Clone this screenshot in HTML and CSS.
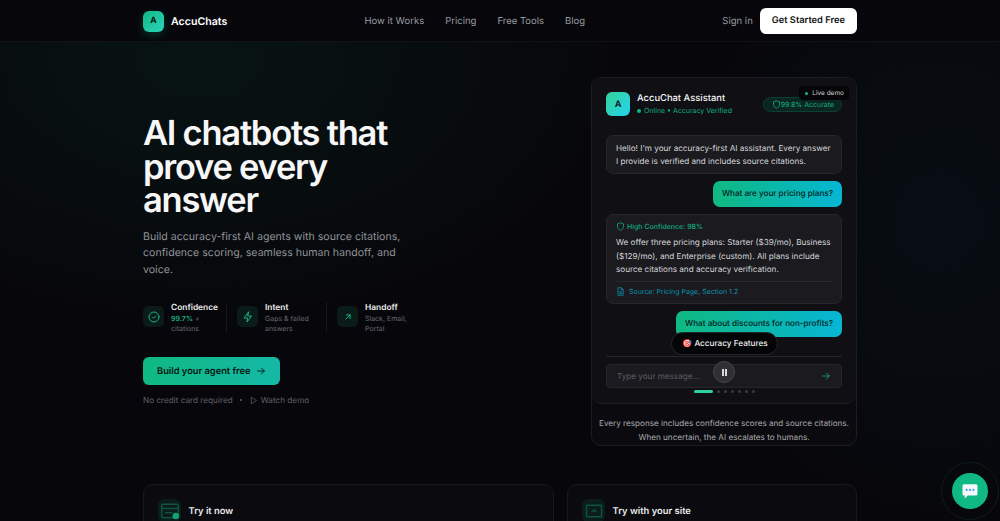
FILE: index.html
```html
<!DOCTYPE html>
<html lang="en">
<head>
  <meta charset="UTF-8">
  <meta name="viewport" content="width=device-width, initial-scale=1.0">
  <title>AccuChats</title>
  <link rel="stylesheet" href="styles.css">
</head>
<body>
  <header class="topbar">
    <div class="wrap topbar-row">
      <a class="brand" href="#">
        <span class="brand-mark">A</span>
        <span class="brand-name">AccuChats</span>
      </a>
      <nav class="nav">
        <a href="#">How it Works</a>
        <a href="#">Pricing</a>
        <a href="#">Free Tools</a>
        <a href="#">Blog</a>
      </nav>
      <div class="topbar-actions">
        <a class="signin" href="#">Sign in</a>
        <a class="btn-white" href="#">Get Started Free</a>
      </div>
    </div>
  </header>

  <main class="wrap hero">
    <section class="hero-left">
      <h1>AI chatbots that prove every answer</h1>
      <p class="lead">Build accuracy-first AI agents with source citations, confidence scoring, seamless human handoff, and voice.</p>

      <div class="stats">
        <div class="stat">
          <span class="stat-icon">
            <svg width="12" height="12" viewBox="0 0 24 24" fill="none" stroke="currentColor" stroke-width="2" stroke-linecap="round" stroke-linejoin="round"><circle cx="12" cy="12" r="10"/><path d="m8.5 12 2.5 2.5 4.5-4.5"/></svg>
          </span>
          <div>
            <div class="stat-title">Confidence</div>
            <div class="stat-text"><b>99.7%</b> + citations</div>
          </div>
        </div>
        <div class="stat">
          <span class="stat-icon">
            <svg width="12" height="12" viewBox="0 0 24 24" fill="none" stroke="currentColor" stroke-width="2" stroke-linecap="round" stroke-linejoin="round"><path d="M13 2 4 14h7l-1 8 9-12h-7z"/></svg>
          </span>
          <div>
            <div class="stat-title">Intent</div>
            <div class="stat-text">Gaps &amp; failed answers</div>
          </div>
        </div>
        <div class="stat">
          <span class="stat-icon">
            <svg width="10" height="10" viewBox="0 0 24 24" fill="none" stroke="currentColor" stroke-width="2.4" stroke-linecap="round" stroke-linejoin="round"><path d="M7 17 17 7"/><path d="M8 7h9v9"/></svg>
          </span>
          <div>
            <div class="stat-title">Handoff</div>
            <div class="stat-text">Slack, Email, Portal</div>
          </div>
        </div>
      </div>

      <a class="btn-main" href="#">
        Build your agent free
        <svg width="10" height="10" viewBox="0 0 24 24" fill="none" stroke="currentColor" stroke-width="2.2" stroke-linecap="round" stroke-linejoin="round"><path d="M4 12h16"/><path d="m13 5 7 7-7 7"/></svg>
      </a>

      <div class="note">
        <span>No credit card required</span>
        <span class="note-dot"></span>
        <a href="#">
          <svg width="9" height="9" viewBox="0 0 24 24" fill="none" stroke="currentColor" stroke-width="2" stroke-linejoin="round"><path d="M6 3l14 9-14 9z"/></svg>
          Watch demo
        </a>
      </div>
    </section>

    <section class="demo">
      <div class="chat">
        <span class="live"><i></i>Live demo</span>

        <div class="chat-head">
          <span class="chat-avatar">A</span>
          <div class="chat-who">
            <div class="chat-name">AccuChat Assistant</div>
            <div class="chat-status"><i></i>Online • Accuracy Verified</div>
          </div>
          <span class="accurate">
            <svg width="9" height="9" viewBox="0 0 24 24" fill="none" stroke="currentColor" stroke-width="2.2" stroke-linejoin="round"><path d="M12 2 4 5v7c0 5 3.5 8.2 8 10 4.5-1.800 8-5 8-10V5z"/></svg>
            99.8% Accurate
          </span>
        </div>

        <div class="msgs">
          <div class="msg bot">Hello! I'm your accuracy-first AI assistant. Every answer I provide is verified and includes source citations.</div>
          <div class="msg user">What are your pricing plans?</div>
          <div class="msg bot cited">
            <div class="conf">
              <svg width="9" height="9" viewBox="0 0 24 24" fill="none" stroke="currentColor" stroke-width="2.2" stroke-linejoin="round"><path d="M12 2 4 5v7c0 5 3.5 8.2 8 10 4.5-1.800 8-5 8-10V5z"/></svg>
              High Confidence: 98%
            </div>
            <div class="answer">We offer three pricing plans: Starter ($39/mo), Business ($129/mo), and Enterprise (custom). All plans include source citations and accuracy verification.</div>
            <div class="source">
              <svg width="9" height="9" viewBox="0 0 24 24" fill="none" stroke="currentColor" stroke-width="2.2" stroke-linejoin="round"><path d="M14 2H5v20h14V7z"/><path d="M14 2v5h5"/><path d="M8 13h8M8 17h8"/></svg>
              Source: Pricing Page, Section 1.2
            </div>
          </div>
          <div class="msg user">What about discounts for non-profits?</div>
        </div>

        <span class="feature-pill">🎯 Accuracy Features</span>

        <div class="chat-foot">
          <div class="chat-input">
            <span>Type your message...</span>
            <svg width="10" height="10" viewBox="0 0 24 24" fill="none" stroke="currentColor" stroke-width="2.2" stroke-linecap="round" stroke-linejoin="round"><path d="M4 12h16"/><path d="m13 5 7 7-7 7"/></svg>
          </div>
        </div>

        <span class="pause"><i></i><i></i></span>

        <div class="dots">
          <i class="on"></i><i></i><i></i><i></i><i></i><i></i><i></i>
        </div>
      </div>
      <p class="demo-caption">Every response includes confidence scores and source citations. When uncertain, the AI escalates to humans.</p>
    </section>
  </main>

  <section class="wrap tries">
    <div class="try">
      <span class="try-icon">
        <svg width="20" height="20" viewBox="0 0 24 24" fill="none" stroke="#10523f" stroke-width="1.8"><rect x="2" y="4" width="20" height="16" rx="2"/><path d="M2 9h20M6 14h9"/><circle cx="19" cy="18" r="4" fill="#12a377" stroke="none"/></svg>
      </span>
      <span class="try-title">Try it now</span>
    </div>
    <div class="try">
      <span class="try-icon">
        <svg width="20" height="20" viewBox="0 0 24 24" fill="none" stroke="#10523f" stroke-width="1.8"><rect x="3" y="5" width="18" height="14" rx="1"/><path d="m9 13 3-2 3 2"/></svg>
      </span>
      <span class="try-title">Try with your site</span>
    </div>
  </section>

  <div class="widget">
    <span class="widget-btn">
      <svg width="18" height="18" viewBox="0 0 24 24"><path d="M4 3h16a2 2 0 0 1 2 2v11a2 2 0 0 1-2 2H9l-4 4v-4H4a2 2 0 0 1-2-2V5a2 2 0 0 1 2-2z" fill="#f4f7fb"/><circle cx="7.5" cy="10.5" r="1.4" fill="#3b9bf0"/><circle cx="12" cy="10.5" r="1.4" fill="#3b9bf0"/><circle cx="16.5" cy="10.5" r="1.4" fill="#3b9bf0"/></svg>
    </span>
  </div>
</body>
</html>
```

FILE: styles.css
```css
* {
  box-sizing: border-box;
}
html, body {
  height: 100%;
  overflow: hidden;
}
body {
  margin: 0;
  font-family: Inter, "Liberation Sans", sans-serif;
  text-rendering: geometricPrecision;
  color: #fff;
  background-color: #07070b;
  background-image:
    radial-gradient(ellipse 420px 260px at 200px 60px, rgba(16, 185, 129, 0.07), transparent 100%),
    radial-gradient(ellipse 260px 300px at 940px 220px, rgba(20, 140, 184, 0.05), transparent 100%);
}
a {
  color: inherit;
  text-decoration: none;
}
.wrap {
  width: 714px;
  margin: 0 auto;
}

/* top bar */
.topbar {
  height: 42px;
  background-color: #07070b;
  border-bottom: 1px solid #101216;
}
.topbar-row {
  display: flex;
  align-items: center;
  justify-content: space-between;
  height: 42px;
}
.brand {
  display: flex;
  align-items: center;
  gap: 7px;
}
.brand-mark {
  display: flex;
  align-items: center;
  justify-content: center;
  width: 21px;
  height: 21px;
  border-radius: 6px;
  background: linear-gradient(135deg, #10b981, #2dd4bf);
  box-shadow: 0 3px 8px rgba(16, 185, 129, 0.25);
  color: #06130f;
  font-size: 8.5px;
  font-weight: 700;
}
.brand-name {
  font-size: 10.6px;
  font-weight: 600;
}
.nav {
  display: flex;
  gap: 21px;
  font-size: 9.5px;
  color: #96999f;
}
.topbar-actions {
  display: flex;
  align-items: center;
  gap: 7px;
}
.signin {
  font-size: 9.5px;
  color: #96999f;
}
.btn-white {
  padding: 0 12px;
  height: 26px;
  line-height: 26px;
  border-radius: 6px;
  background-color: #fff;
  color: #111;
  font-size: 9.3px;
  font-weight: 600;
}

/* hero */
.hero {
  display: flex;
  justify-content: space-between;
  align-items: flex-start;
  padding-top: 35px;
}
.hero-left {
  width: 300px;
  padding-top: 40px;
}
h1 {
  margin: 0;
  max-width: 270px;
  font-size: 34.5px;
  line-height: 33.5px;
  font-weight: 600;
  letter-spacing: -1.25px;
  color: #f7f7f8;
}
.lead {
  margin: 11px 0 0;
  max-width: 262px;
  font-size: 10.6px;
  line-height: 16.5px;
  color: #8f9298;
}
.stats {
  display: flex;
  margin-top: 24px;
}
.stat {
  display: flex;
  flex: none;
  gap: 7px;
  padding-right: 10px;
  margin-right: 10px;
  border-right: 1px solid #14161a;
  height: 31px;
  width: 84px;
}
.stat:nth-child(2) {
  width: 90px;
}
.stat:last-child {
  border-right: 0;
  margin-right: 0;
  padding-right: 0;
  width: 70px;
}
.stat-icon {
  display: flex;
  flex: none;
  align-items: center;
  justify-content: center;
  width: 21px;
  height: 21px;
  margin-top: 4px;
  border-radius: 5px;
  background-color: #0b1b17;
  color: #16b586;
}
.stat-title {
  margin-top: 1px;
  font-size: 8.4px;
  line-height: 11px;
  font-weight: 600;
  color: #eceded;
}
.stat-text {
  font-size: 7px;
  line-height: 9.5px;
  color: #65686f;
}
.stat-text b {
  color: #16b586;
  font-weight: 600;
}
.btn-main {
  display: inline-flex;
  align-items: center;
  gap: 5px;
  margin-top: 24px;
  padding: 0 14px;
  height: 28px;
  border-radius: 6px;
  background: linear-gradient(90deg, #10b981, #14b8a6);
  color: #06130f;
  font-size: 9.3px;
  font-weight: 600;
}
.note {
  display: flex;
  align-items: center;
  gap: 6px;
  margin-top: 10px;
  font-size: 8.2px;
  color: #5f6168;
}
.note a {
  display: flex;
  align-items: center;
  gap: 3px;
}
.note-dot {
  width: 2px;
  height: 2px;
  margin: 0 1px;
  border-radius: 50%;
  background-color: #5f6168;
}

/* demo panel */
.demo {
  width: 266px;
  border: 1px solid #1c1d22;
  border-radius: 10px;
  background-color: #0b0b0f;
}
.chat {
  position: relative;
  height: 326px;
  padding: 14px 14px 0;
  border-bottom: 1px solid #1f2025;
  border-radius: 10px;
  background-color: #0f0f14;
}
.live {
  position: absolute;
  top: 8px;
  right: 7px;
  display: flex;
  align-items: center;
  gap: 4px;
  padding: 0 5px 0 6px;
  height: 14px;
  border-radius: 4px;
  background-color: #050507;
  font-size: 6.5px;
  color: #d0d1d4;
}
.live i {
  width: 3px;
  height: 3px;
  border-radius: 50%;
  background-color: #10b981;
}
.chat-head {
  display: flex;
  align-items: center;
  gap: 7px;
}
.chat-avatar {
  display: flex;
  align-items: center;
  justify-content: center;
  width: 24px;
  height: 24px;
  border-radius: 6px;
  background: linear-gradient(135deg, #34d399, #22d3ee);
  color: #08201f;
  font-size: 9px;
  font-weight: 700;
}
.chat-who {
  flex: 1;
}
.chat-name {
  font-size: 9.4px;
  line-height: 12px;
  font-weight: 500;
  color: #f6f6f7;
}
.chat-status {
  display: flex;
  align-items: center;
  gap: 3px;
  margin-top: 1px;
  font-size: 7px;
  line-height: 9px;
  color: #12b083;
}
.chat-status i {
  width: 4px;
  height: 4px;
  border-radius: 50%;
  background-color: #10b981;
}
.accurate {
  display: flex;
  align-items: center;
  padding: 0 7px 0 8px;
  height: 15px;
  border: 1px solid #0d3f33;
  border-radius: 8px;
  background-color: #0b2620;
  font-size: 7px;
  color: #15ad81;
}
.msgs {
  display: flex;
  flex-direction: column;
  gap: 7px;
  margin-top: 19px;
}
.msg {
  border-radius: 7px;
  font-size: 8.15px;
  line-height: 13px;
}
.msg.bot {
  padding: 6px 9px 5px;
  border: 1px solid #26272c;
  background-color: #1a1a1f;
  color: #d6d7d9;
}
.msg.cited {
  padding-bottom: 6px;
}
.msg.user {
  align-self: flex-end;
  padding: 6px 9px 7px;
  background: linear-gradient(90deg, #10b981, #06b6d4);
  color: #06201c;
  font-weight: 500;
}
.conf {
  display: flex;
  align-items: center;
  gap: 2px;
  font-size: 7px;
  line-height: 11px;
  font-weight: 500;
  color: #12ab80;
}
.answer {
  margin-top: 4px;
  line-height: 13.5px;
}
.source {
  display: flex;
  align-items: center;
  gap: 4px;
  margin-top: 4px;
  padding-top: 5px;
  border-top: 1px solid #2a2b30;
  font-size: 7px;
  line-height: 10px;
  color: #0e93ad;
}
.feature-pill {
  position: absolute;
  left: 79px;
  top: 254px;
  padding: 0 9px 0 10px;
  height: 23px;
  line-height: 21px;
  border: 1px solid #24252a;
  border-radius: 12px;
  background-color: #040506;
  font-size: 8.2px;
  font-weight: 500;
  color: #f0f0f1;
  white-space: nowrap;
}
.chat-foot {
  margin-top: 19px;
  padding-top: 7px;
  border-top: 1px solid #24252a;
}
.chat-input {
  display: flex;
  align-items: center;
  justify-content: space-between;
  padding: 0 10px;
  height: 24px;
  border: 1px solid #26272c;
  border-radius: 4px;
  background-color: #1a1a1f;
  font-size: 8.15px;
  color: #5c5e64;
}
.chat-input svg {
  color: #10a37a;
}
.pause {
  position: absolute;
  left: 121px;
  top: 283px;
  display: flex;
  align-items: center;
  justify-content: center;
  gap: 1px;
  width: 22px;
  height: 22px;
  border: 1px solid #46474c;
  border-radius: 50%;
  background-color: #2f3034;
}
.pause i {
  width: 2px;
  height: 7px;
  background-color: #d8d8da;
}
.dots {
  display: flex;
  justify-content: center;
  align-items: center;
  gap: 4px;
  margin-top: 2px;
}
.dots i {
  width: 3px;
  height: 3px;
  border-radius: 50%;
  background-color: #3a3b40;
}
.dots i.on {
  width: 19px;
  height: 3px;
  border-radius: 2px;
  background-color: #2dd4a0;
}
.demo-caption {
  margin: 0;
  padding: 13px 0 0;
  height: 41px;
  text-align: center;
  font-size: 8.15px;
  line-height: 13.5px;
  color: #a8aaae;
}

/* bottom cards */
.tries {
  display: grid;
  grid-template-columns: 411px 290px;
  gap: 13px;
  margin-top: 38px;
}
.try {
  display: flex;
  align-items: flex-start;
  gap: 7.5px;
  height: 80px;
  padding: 14px;
  border: 1px solid #17181c;
  border-radius: 10px;
  background-color: #0b0b0f;
}
.try-icon {
  display: flex;
  align-items: center;
  justify-content: center;
  width: 23px;
  height: 23px;
  border-radius: 6px;
  background-color: #0b1d18;
}
.try-title {
  margin-top: 6px;
  font-size: 9.4px;
  line-height: 13px;
  font-weight: 600;
  color: #e9e9ea;
}

/* chat widget */
.widget {
  position: fixed;
  left: 941px;
  top: 462px;
  display: flex;
  align-items: center;
  justify-content: center;
  width: 58px;
  height: 58px;
  border: 1px solid #0d1f1b;
  border-radius: 50%;
}
.widget-btn {
  display: flex;
  align-items: center;
  justify-content: center;
  width: 36px;
  height: 36px;
  border-radius: 50%;
  background-color: #10b981;
}
```
